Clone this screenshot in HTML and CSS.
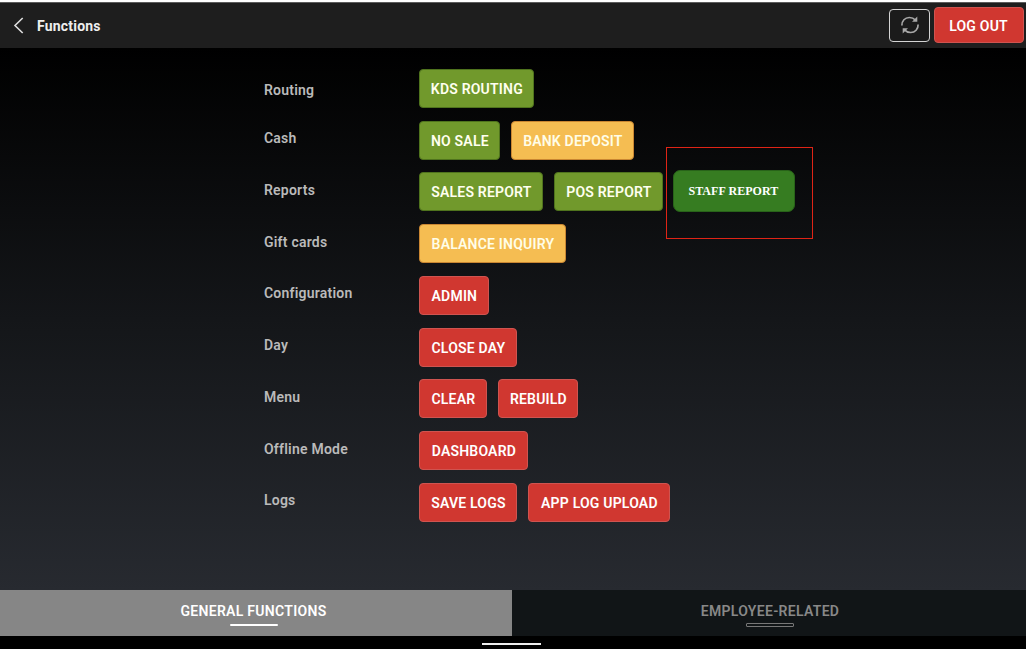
FILE: index.html
```html
<!DOCTYPE html>
<html lang="en">
<head>
<meta charset="utf-8">
<title>Functions</title>
<link rel="stylesheet" href="styles.css">
</head>
<body>
<div class="app">
  <header class="topbar">
    <svg class="back" width="12" height="18" viewBox="0 0 12 18"><path d="M9.700 2 2 9.500l7.700 7.500" fill="none" stroke="#ddd" stroke-width="1.6"/></svg>
    <h1 class="title">Functions</h1>
    <button class="refresh" aria-label="Refresh">
      <svg width="20" height="20" viewBox="0 0 20 20"><path fill="none" stroke="#a8a8a8" stroke-width="1.7" d="M1.900 10.500C1.700 5.800 5 2.500 9.300 2.500c2.700 0 4.600 1 6.200 2.700M18.100 9.500c.2 4.700-3.100 8-7.400 8-2.700 0-4.600-1-6.200-2.700"/><path fill="#a8a8a8" d="M17.300 1.500v5.300H12zM2.700 18.500v-5.300H8z"/></svg>
    </button>
    <button class="btn red logout">LOG OUT</button>
  </header>
  <main class="content">
    <div class="row first"><span class="label">Routing</span><button class="btn green w115">KDS ROUTING</button></div>
    <div class="row"><span class="label">Cash</span><button class="btn green w81">NO SALE</button><button class="btn amber w123">BANK DEPOSIT</button></div>
    <div class="row"><span class="label">Reports</span><button class="btn green w124">SALES REPORT</button><button class="btn green w109">POS REPORT</button><span class="highlight"><button class="btn staff">STAFF REPORT</button></span></div>
    <div class="row"><span class="label">Gift cards</span><button class="btn amber w147">BALANCE INQUIRY</button></div>
    <div class="row"><span class="label">Configuration</span><button class="btn red w70">ADMIN</button></div>
    <div class="row"><span class="label">Day</span><button class="btn red w98">CLOSE DAY</button></div>
    <div class="row"><span class="label">Menu</span><button class="btn red w68">CLEAR</button><button class="btn red w80">REBUILD</button></div>
    <div class="row"><span class="label">Offline Mode</span><button class="btn red w109">DASHBOARD</button></div>
    <div class="row"><span class="label">Logs</span><button class="btn red w98">SAVE LOGS</button><button class="btn red w142">APP LOG UPLOAD</button></div>
  </main>
  <nav class="tabs">
    <div class="tab active">GENERAL FUNCTIONS<span class="bar"></span></div>
    <div class="tab">EMPLOYEE-RELATED<span class="bar"></span></div>
  </nav>
  <div class="system"><span class="handle"></span></div>
</div>
</body>
</html>
```
FILE: styles.css
```css
* { box-sizing: border-box; }
body { margin: 0; font-family: Roboto, sans-serif; background: #000; }
.app { width: 1026px; height: 649px; display: flex; flex-direction: column; overflow: hidden; border-top: 2px solid #fff; }
.topbar { height: 46px; flex: none; display: flex; align-items: center; background: #1e1e1e; border-top: 1px solid #5c5c5c; padding: 0 2px 1px 13px; }
.title { margin: 0 auto 0 12px; padding-top: 1px; font-size: 14px; font-weight: 700; color: #eee; letter-spacing: 0.2px; }
.refresh { width: 41px; height: 33px; margin-right: 4px; padding: 0; display: flex; align-items: center; justify-content: center; background: #1b1b1b; border: 1px solid #d4d4d4; border-radius: 4px; }
.content { height: 542px; flex: none; padding: 20.750px 0 0 264px; background: linear-gradient(#000, #141619 50%, #272a30); }
.row { display: flex; gap: 11px; height: 39px; margin-bottom: 12.75px; align-items: center; }
.label { width: 144.400px; flex: none; font-size: 14px; font-weight: 600; color: #bababa; position: relative; top: -1.800px; letter-spacing: 0.22px; }
.first .label { top: 1.500px; }
.btn { height: 39px; flex: none; padding: 1px 0 0; font: 600 14px Roboto, sans-serif; letter-spacing: 0.2px; color: #fff; border: 1px solid; border-radius: 4px; white-space: nowrap; }
.green { background: #71992c; border-color: #4f731d; color: #fffff0; }
.amber { background: #f5bd52; border-color: #c98632; color: #fffde8; }
.red { background: #d03730; border-color: #cf5450; }
.topbar .refresh { width: 41px; }
.logout { width: 90px; height: 36px; padding-right: 1px; }
.w68 { width: 68px; }
.w70 { width: 70px; }
.w80 { width: 80px; }
.w81 { width: 81px; }
.w98 { width: 98px; }
.w109 { width: 109px; }
.w115 { width: 115px; }
.w123 { width: 123px; }
.w124 { width: 124px; }
.w142 { width: 142px; }
.w147 { width: 147px; }
.highlight { width: 147px; height: 92px; flex: none; margin: 2px 0 0 -8px; padding: 22px 0 0 6px; border: 1px solid #df2416; }
.staff { display: block; width: 122px; height: 42px; background: #367c21; border: 1px solid #286319; border-radius: 7px; font: 700 12px "Liberation Serif", serif; letter-spacing: 0.05px; padding-right: 2px; }
.tabs { height: 46px; flex: none; display: flex; background: #111517; }
.tab { flex: 1; display: flex; flex-direction: column; align-items: center; padding-top: 12px; padding-left: 2px; font-size: 14px; line-height: 18px; font-weight: 600; letter-spacing: 0.3px; color: #888; }
.active { flex: 0 0 512px; background: #868686; color: #fff; padding-left: 0; padding-right: 5px; }
.bar { width: 48px; height: 4px; margin-top: 3px; border: 1px solid #777; border-radius: 1px; }
.active .bar { height: 2px; margin-top: 4px; border: 0; background: #fff; }
.system { height: 13px; flex: none; display: flex; justify-content: center; padding: 7px 3px 0 0; }
.handle { width: 59px; height: 2px; background: #eee; }
```
